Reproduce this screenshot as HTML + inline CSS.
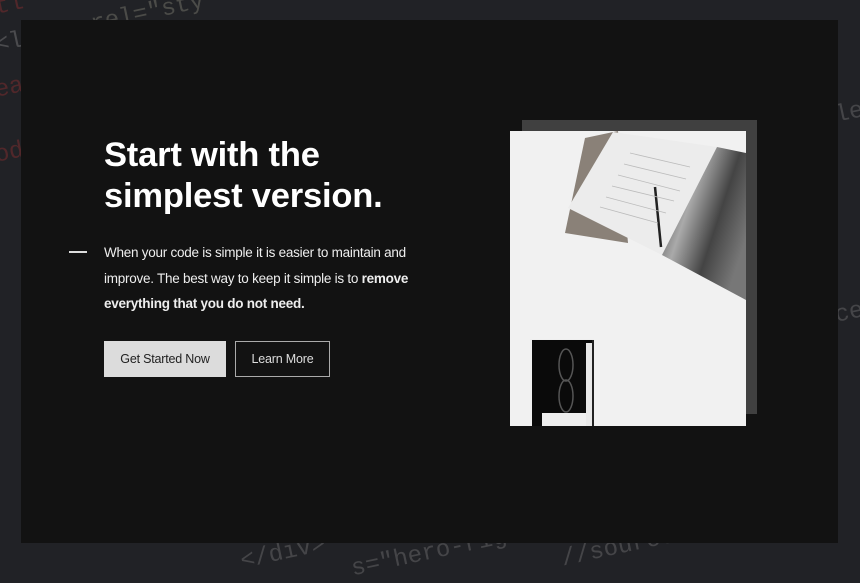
<!DOCTYPE html>
<html><head><style>
body{margin:0;width:860px;height:575px;background:#212226;overflow:hidden;position:relative;font-family:"Liberation Sans",sans-serif}
.code{position:absolute;font-family:"Liberation Mono",monospace;font-size:24px;opacity:.35;white-space:nowrap}
.panel{position:absolute;left:21px;top:20px;width:817px;height:523px;background:#121212}
h1{position:absolute;left:104px;top:135px;margin:0;color:#fff;font-size:34.5px;line-height:41px;font-weight:bold;letter-spacing:-0.2px}
.dash{position:absolute;left:69px;top:251px;width:18px;height:1.5px;background:#ddd}
p{position:absolute;left:104px;top:240px;margin:0;width:320px;color:#eee;font-size:13.5px;line-height:25.5px;letter-spacing:-0.25px}
.b1{position:absolute;left:104px;top:341px;width:122px;height:36px;background:#dcdcdc;color:#222;font-size:12.5px;line-height:36px;text-align:center;letter-spacing:-0.2px}
.b2{position:absolute;left:235px;top:341px;width:93px;height:34px;border:1px solid #aaa;color:#ddd;font-size:12.5px;line-height:34px;text-align:center;letter-spacing:-0.2px}
</style></head><body>
<div class="code" style="left:-5px;top:-8px;color:#a33;transform:rotate(-12deg)">tl</div>
<div class="code" style="left:90px;top:0px;color:#998;transform:rotate(-12deg)">rel="sty</div>
<div class="code" style="left:-5px;top:30px;color:#999;transform:rotate(-12deg)">&lt;l</div>
<div class="code" style="left:-5px;top:75px;color:#a33;transform:rotate(-12deg)">ea</div>
<div class="code" style="left:-5px;top:140px;color:#a33;transform:rotate(-12deg)">od</div>
<div class="code" style="left:240px;top:540px;color:#888;transform:rotate(-12deg)">&lt;/div&gt;</div>
<div class="code" style="left:350px;top:540px;color:#888;transform:rotate(-12deg)">s="hero-rig</div>
<div class="code" style="left:560px;top:530px;color:#888;transform:rotate(-12deg)">//source.un</div>
<div class="code" style="left:835px;top:100px;color:#888;transform:rotate(-12deg)">le</div>
<div class="code" style="left:835px;top:300px;color:#888;transform:rotate(-12deg)">ce</div>
<div class="panel"></div>
<h1>Start with the<br>simplest version.</h1>
<div class="dash"></div>
<p>When your code is simple it is easier to maintain and improve. The best way to keep it simple is to <b>remove everything that you do not need.</b></p>
<div class="b1">Get Started Now</div>
<div class="b2">Learn More</div>
<div style="position:absolute;left:522px;top:120px;width:235px;height:294px;background:#404040"></div>
<svg style="position:absolute;left:510px;top:131px" width="236" height="295" viewBox="0 0 236 295">
<defs><linearGradient id="g" x1="0" y1="0" x2="1" y2="0.6"><stop offset="0" stop-color="#222"/><stop offset=".4" stop-color="#aaa"/><stop offset=".7" stop-color="#444"/><stop offset="1" stop-color="#777"/></linearGradient></defs>
<rect width="236" height="295" fill="#f1f1f1"/>
<polygon points="75,7 108,0 118,112 55,102" fill="#8a8178"/>
<polygon points="103,1 207,16 152,124 58,77" fill="#ececec"/>
<polygon points="207,16 236,22 236,169 152,124" fill="url(#g)"/>
<line x1="145" y1="56" x2="151" y2="116" stroke="#222" stroke-width="2.5"/>
<g stroke="#bbb" stroke-width="0.8"><line x1="120" y1="22" x2="180" y2="36"/><line x1="114" y1="33" x2="176" y2="48"/><line x1="108" y1="44" x2="170" y2="60"/><line x1="102" y1="55" x2="164" y2="70"/><line x1="96" y1="66" x2="156" y2="82"/><line x1="90" y1="76" x2="148" y2="92"/></g>
<rect x="20" y="208" width="64" height="87" fill="#eee"/>
<rect x="22" y="209" width="62" height="86" fill="#0a0a0a"/>
<rect x="32" y="282" width="46" height="13" fill="#eee"/>
<rect x="76" y="212" width="6" height="83" fill="#e8e8e8"/>
<rect x="82" y="209" width="2" height="86" fill="#222"/>
<ellipse cx="56" cy="234" rx="7" ry="16" fill="none" stroke="#555" stroke-width="1.5"/>
<ellipse cx="56" cy="265" rx="7" ry="16" fill="none" stroke="#555" stroke-width="1.5"/>
</svg>
</body></html>
